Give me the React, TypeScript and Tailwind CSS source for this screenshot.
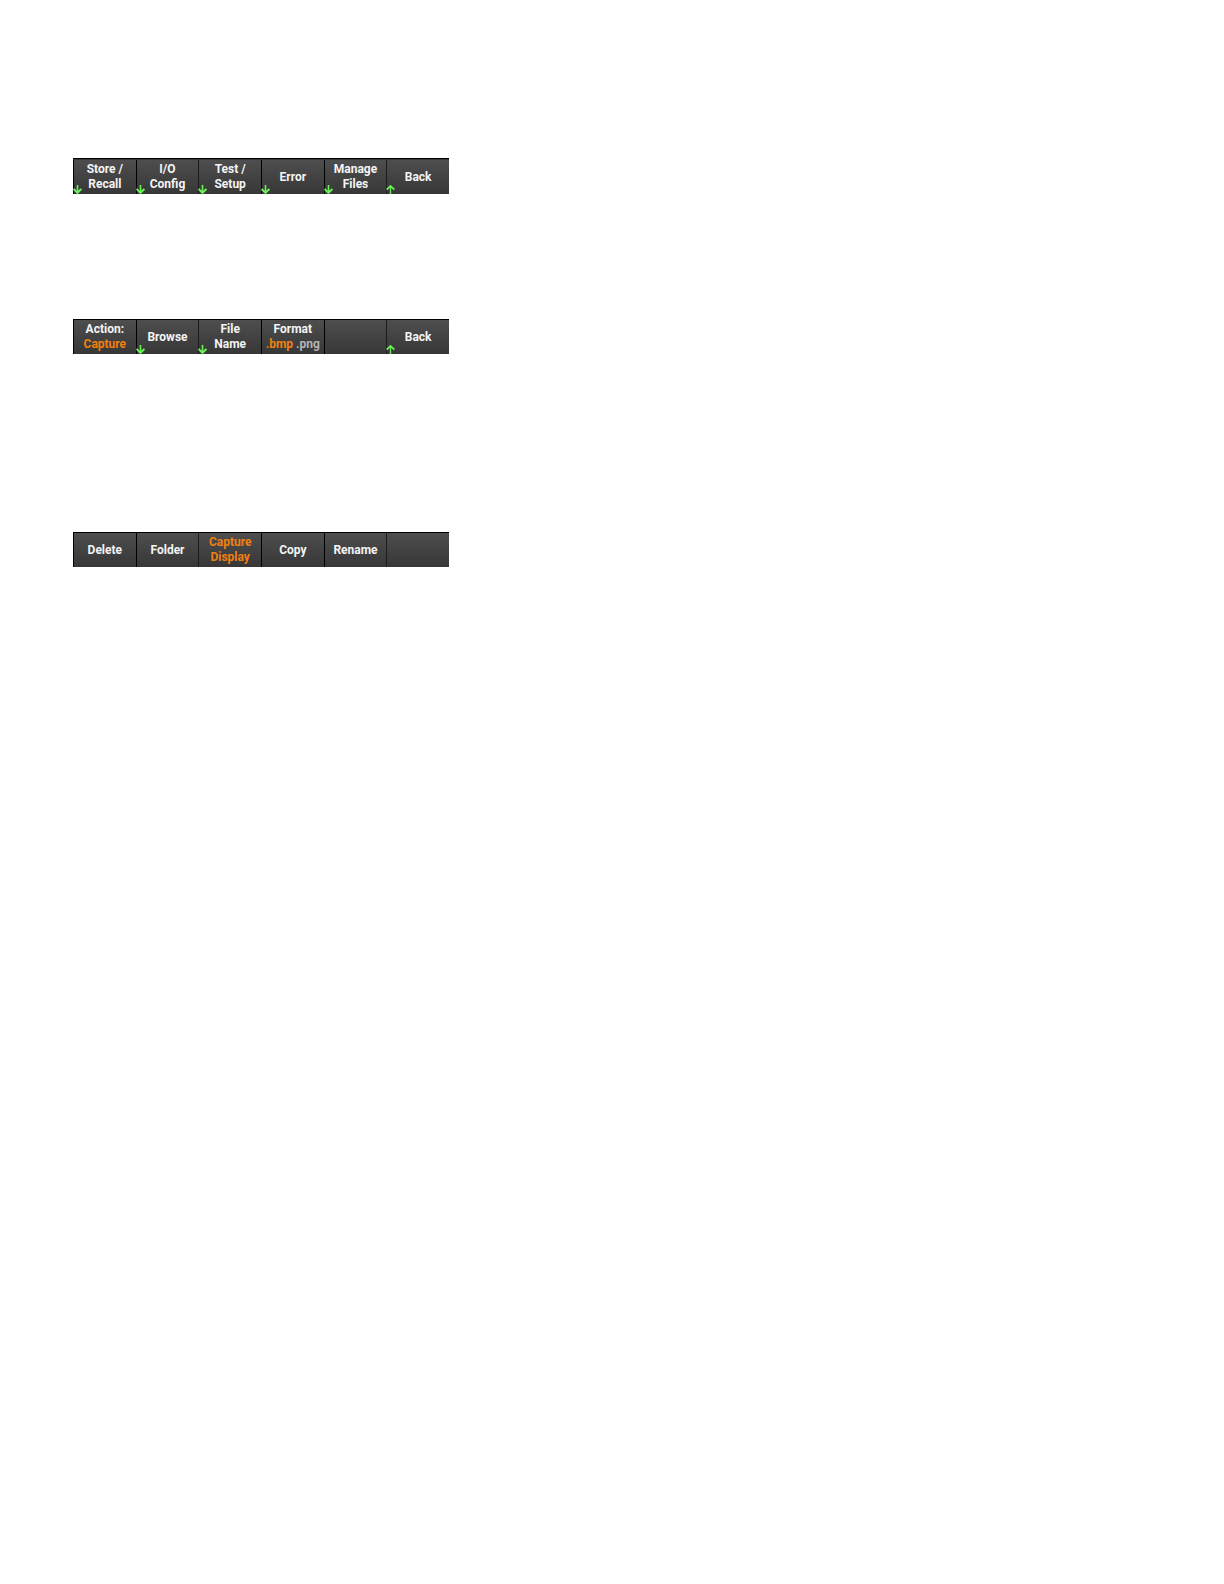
import React from "react";

type Key = {
  lines: React.ReactNode[];
  arrow?: "down" | "up";
  active?: boolean;
  soft?: boolean;
};

const managementKeys: Key[] = [
  { lines: ["Store /", "Recall"], arrow: "down" },
  { lines: ["I/O", "Config"], arrow: "down" },
  { lines: ["Test /", "Setup"], arrow: "down", soft: true },
  { lines: ["Error"], arrow: "down" },
  { lines: ["Manage", "Files"], arrow: "down" },
  { lines: ["Back"], arrow: "up", soft: true },
];

const fileKeys: Key[] = [
  { lines: ["Action:", <span className="text-[#f08010]">Capture</span>] },
  { lines: ["Browse"], arrow: "down" },
  { lines: ["File", "Name"], arrow: "down", soft: true },
  {
    lines: [
      "Format",
      <>
        <span className="text-[#f08010]">.bmp</span>{" "}
        <span className="text-[#b4b4b4]">.png</span>
      </>,
    ],
  },
  { lines: [] },
  { lines: ["Back"], arrow: "up", soft: true },
];

const actionKeys: Key[] = [
  { lines: ["Delete"] },
  { lines: ["Folder"] },
  { lines: ["Capture", "Display"], active: true, soft: true },
  { lines: ["Copy"] },
  { lines: ["Rename"] },
  { lines: [], soft: true },
];

function Arrow({ direction }: { direction: "down" | "up" }) {
  return (
    <svg
      className="absolute bottom-0 -left-px h-[9px] w-[9px]"
      viewBox="0 0 9 9"
      fill="none"
      stroke="#6cf05c"
      aria-hidden="true"
    >
      {direction === "down" ? (
        <>
          <path d="M4.5 0V8" strokeWidth="1.6" />
          <path d="M0.6 4L4.5 7.8L8.4 4" strokeWidth="2" />
        </>
      ) : (
        <>
          <path d="M4.5 1V9" strokeWidth="1.3" />
          <path d="M0.6 4.6L4.5 1L8.4 4.6" strokeWidth="1.8" />
        </>
      )}
    </svg>
  );
}

function SoftKey({ item }: { item: Key }) {
  return (
    <button
      type="button"
      disabled={item.lines.length === 0}
      aria-label={item.lines.length === 0 ? "Unassigned" : undefined}
      className={`relative flex flex-col items-center justify-center border-l bg-linear-to-b from-[#4e4e4e] to-[#373737] ${
        item.soft ? "border-[#1c1c1c]" : "border-black"
      } ${item.active ? "text-[#f08010]" : "text-[#f4f4f4]"}`}
    >
      {item.lines.map((line, i) => (
        <span key={i} className="block whitespace-nowrap">
          {line}
        </span>
      ))}
      {item.arrow && <Arrow direction={item.arrow} />}
    </button>
  );
}

function SoftKeyBar({
  label,
  items,
  tall = false,
}: {
  label: string;
  items: Key[];
  tall?: boolean;
}) {
  return (
    <nav
      aria-label={label}
      className={`grid w-full max-w-[376px] grid-cols-6 border-t border-black bg-[#373737] ${
        tall ? "min-h-9 pt-px" : "min-h-[35px]"
      }`}
    >
      {items.map((item, i) => (
        <SoftKey key={i} item={item} />
      ))}
    </nav>
  );
}

export default function App() {
  return (
    <main className="min-h-screen bg-white px-[73px] pt-[158px] font-['Roboto',sans-serif] text-[12px] leading-[15px] font-bold">
      <div className="pb-[125px]">
        <SoftKeyBar label="Utility" items={managementKeys} tall />
      </div>
      <div className="pb-[178px]">
        <SoftKeyBar label="Manage files" items={fileKeys} />
      </div>
      <SoftKeyBar label="Action" items={actionKeys} />
    </main>
  );
}
